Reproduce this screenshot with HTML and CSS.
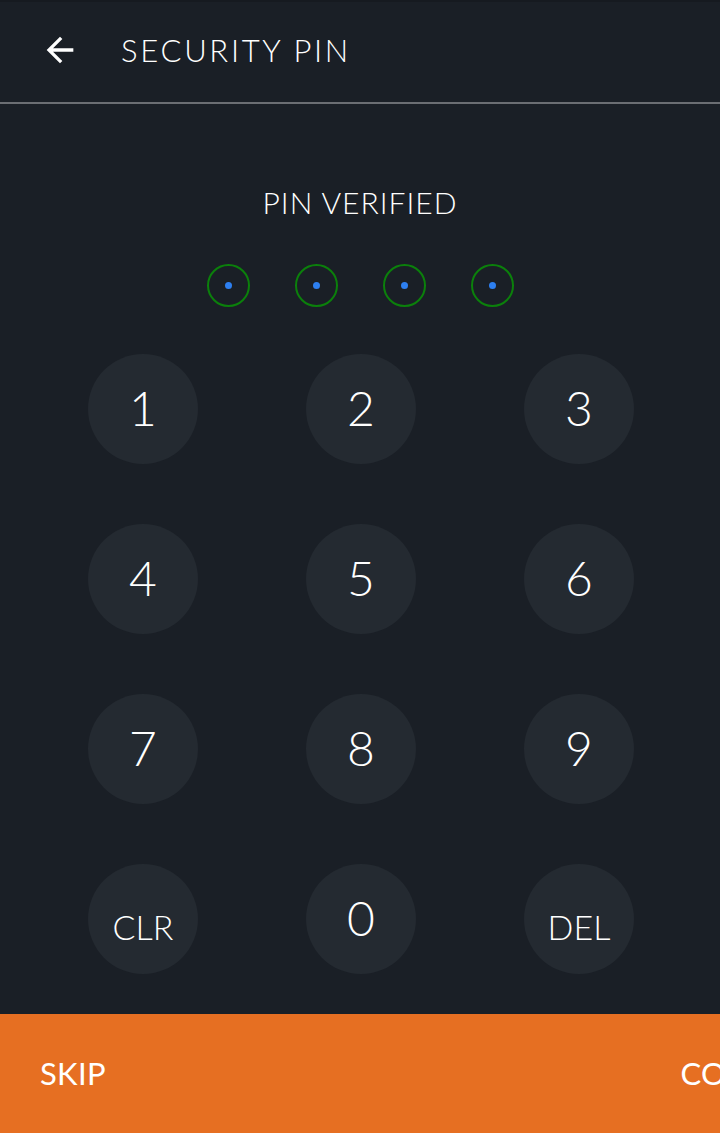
FILE: index.html
```html
<!DOCTYPE html>
<html>
<head>
<meta charset="utf-8">
<link rel="stylesheet" href="styles.css">
</head>
<body>
<div class="screen">
  <header class="topbar">
    <svg class="back" viewBox="0 0 24 24" width="40" height="40"><path d="M20 11H7.83l5.59-5.59L12 4l-8 8 8 8 1.41-1.41L7.83 13H20v-2z" fill="#ffffff"/></svg>
    <div class="title">SECURITY PIN</div>
  </header>
  <main class="content">
    <div class="status">PIN VERIFIED</div>
    <div class="dots">
      <span class="dot"><span class="fill"></span></span>
      <span class="dot"><span class="fill"></span></span>
      <span class="dot"><span class="fill"></span></span>
      <span class="dot"><span class="fill"></span></span>
    </div>
    <div class="keypad">
      <div class="key">1</div>
      <div class="key">2</div>
      <div class="key">3</div>
      <div class="key">4</div>
      <div class="key">5</div>
      <div class="key">6</div>
      <div class="key">7</div>
      <div class="key">8</div>
      <div class="key">9</div>
      <div class="key word">CLR</div>
      <div class="key">0</div>
      <div class="key word">DEL</div>
    </div>
  </main>
  <footer class="actions">
    <div class="action">SKIP</div>
    <div class="action right">CONTINUE</div>
  </footer>
</div>
</body>
</html>
```

FILE: styles.css
```css
html, body {
  margin: 0;
  padding: 0;
  background: #1a1f26;
}
.screen {
  width: 720px;
  height: 1133px;
  display: flex;
  flex-direction: column;
  overflow: hidden;
  font-family: Lato, "Open Sans", sans-serif;
  color: #ffffff;
  background: #1a1f26;
  border-top: 2px solid #161a20;
  box-sizing: border-box;
}
.topbar {
  height: 100px;
  flex: none;
  display: flex;
  align-items: center;
  border-bottom: 2px solid #6b6e73;
  padding-left: 40px;
}
.back {
  display: block;
  margin-top: -4px;
}
.title {
  margin-left: 41px;
  font-size: 31px;
  font-weight: 300;
  letter-spacing: 2.7px;
  margin-top: -4px;
}
.content {
  flex: 1;
  display: flex;
  flex-direction: column;
  align-items: center;
}
.status {
  margin-top: 80px;
  font-size: 30px;
  font-weight: 300;
  letter-spacing: 1px;
  line-height: 36px;
}
.dots {
  margin-top: 44px;
  display: flex;
  gap: 45px;
}
.dot {
  width: 43px;
  height: 43px;
  box-sizing: border-box;
  border: 2px solid #0b800b;
  border-radius: 50%;
  display: flex;
  align-items: center;
  justify-content: center;
}
.fill {
  width: 7px;
  height: 7px;
  border-radius: 50%;
  background: #2d7ff0;
}
.keypad {
  margin-top: 47px;
  align-self: stretch;
  padding-left: 88px;
  display: grid;
  grid-template-columns: repeat(3, 110px);
  column-gap: 108px;
  row-gap: 60px;
}
.key {
  width: 110px;
  height: 110px;
  border-radius: 50%;
  background: #242a31;
  display: flex;
  align-items: center;
  justify-content: center;
  font-size: 48px;
  font-weight: 300;
  padding-bottom: 4px;
  box-sizing: border-box;
}
.key.word {
  font-size: 34px;
  padding-top: 14px;
  padding-bottom: 0;
}
.actions {
  height: 119px;
  flex: none;
  background: #e66f22;
  display: flex;
  align-items: center;
  justify-content: space-between;
  padding-left: 40px;
  margin-right: -123px;
}
.action {
  font-size: 31px;
  font-weight: 400;
  letter-spacing: 0.3px;
  margin-top: -2px;
}
```
